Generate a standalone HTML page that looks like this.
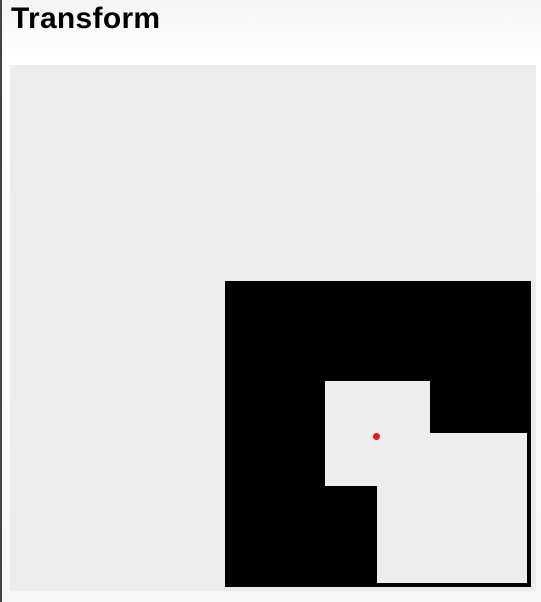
<!DOCTYPE html>
<html><head><meta charset="utf-8"><style>
html,body{margin:0;padding:0;}
body{width:541px;height:602px;background:linear-gradient(#f4f4f4,#fff 60px,#f6f6f6);position:relative;overflow:hidden;font-family:"Liberation Sans",sans-serif;}
.lb{position:absolute;left:0;top:0;width:2px;height:602px;background:#444;}
h1{position:absolute;left:11px;top:0;margin:0;font-size:30px;font-weight:bold;color:#000;line-height:38px;letter-spacing:0.3px;}
.panel{position:absolute;left:10px;top:65px;width:526px;height:526px;background:#ececec;}
.blk{position:absolute;left:225px;top:281px;width:306px;height:306px;background:#000;}
.a{position:absolute;left:325px;top:381px;width:105px;height:105px;background:#eeeeee;}
.b{position:absolute;left:377px;top:433px;width:150px;height:150px;background:#ededed;border:1.5px solid #000;border-left:none;border-top:none;}
.dot{position:absolute;left:373px;top:433px;width:7px;height:7px;border-radius:50%;background:#e21b1b;}
</style></head><body>
<div class="lb"></div>
<h1>Transform</h1>
<div class="panel"></div>
<div class="blk"></div>
<div class="a"></div>
<div class="b"></div>
<div class="dot"></div>
</body></html>
